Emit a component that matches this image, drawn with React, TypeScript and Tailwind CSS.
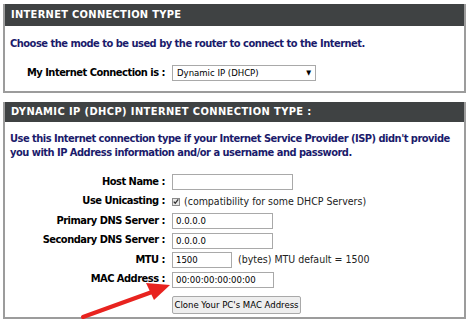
import { useState } from "react";

const font = "[font-family:'DejaVu_Sans',sans-serif] [font-stretch:condensed]";

function Field({ label, children }: { label: string; children: React.ReactNode }) {
  return (
    <div className="flex items-center h-[16px]">
      <div className="w-[161px] text-right font-bold text-[11px] tracking-[-0.5px] text-black pr-[1px] whitespace-nowrap">
        {label} :
      </div>
      <div className="ml-[6px] flex items-center">{children}</div>
    </div>
  );
}

function TextBox({ value, width }: { value?: string; width: string }) {
  return (
    <div
      className={`${width} h-[16px] border border-[#a9a9a9] bg-white px-[3px] text-[9.5px] leading-[14px] text-black`}
    >
      {value}
    </div>
  );
}

export default function App() {
  const [checked] = useState(true);
  return (
    <div className={`relative w-[469px] h-[323px] bg-white ${font} overflow-hidden`}>
      <div className="pt-[4px] pl-[3px] flex flex-col gap-[9px]">
        {/* connection type */}
        <div className="w-[463px] h-[89px] border-2 border-[#9c9c9c] border-t-0">
          <div className="h-[22px] bg-[#3f4243] text-white font-bold text-[11px] tracking-[0.3px] pl-[6px] flex items-center">
            INTERNET CONNECTION TYPE
          </div>
          <div className="pl-[5px] pt-[11px] text-[11px] tracking-[-0.5px] font-bold text-[#1b1b6b] leading-[14px] whitespace-nowrap">
            Choose the mode to be used by the router to connect to the Internet.
          </div>
          <div className="flex items-center mt-[14px] h-[16px]">
            <div className="w-[161px] text-right font-bold text-[11px] tracking-[-0.5px] text-black pr-[1px] whitespace-nowrap">
              My Internet Connection is :
            </div>
            <div className="ml-[6px] w-[144px] h-[16px] border border-[#a9a9a9] bg-white flex items-center justify-between px-[4px] text-[9.5px] text-black">
              <span>Dynamic IP (DHCP)</span>
              <span className="text-[7px]">▼</span>
            </div>
          </div>
        </div>

        {/* dhcp settings */}
        <div className="w-[463px] h-[217px] border-2 border-[#9c9c9c] border-t-0">
          <div className="h-[20px] bg-[#3f4243] text-white font-bold text-[11px] tracking-[0.4px] pl-[6px] flex items-center">
            DYNAMIC IP (DHCP) INTERNET CONNECTION TYPE :
          </div>
          <p className="pl-[5px] pt-[10px] text-[11px] tracking-[-0.5px] font-bold text-[#1b1b6b] leading-[14px] whitespace-nowrap">
            Use this Internet connection type if your Internet Service Provider (ISP) didn't provide
            <br />
            you with IP Address information and/or a username and password.
          </p>
          <div className="mt-[14px] flex flex-col gap-[3.5px]">
            <Field label="Host Name">
              <TextBox width="w-[121px]" />
            </Field>
            <Field label="Use Unicasting">
              <div className="w-[8px] h-[8px] border border-[#8a8a8a] bg-[#e6e6e6] flex items-center justify-center">
                {checked && (
                  <svg width="7" height="7" viewBox="0 0 8 8">
                    <path d="M1 4.2 L3 6.4 L7 1.2" stroke="#333" strokeWidth="1.8" fill="none" />
                  </svg>
                )}
              </div>
              <span className="ml-[4px] text-[10.5px] text-[#222] whitespace-nowrap">
                (compatibility for some DHCP Servers)
              </span>
            </Field>
            <Field label="Primary DNS Server">
              <TextBox value="0.0.0.0" width="w-[101px]" />
            </Field>
            <Field label="Secondary DNS Server">
              <TextBox value="0.0.0.0" width="w-[101px]" />
            </Field>
            <Field label="MTU">
              <TextBox value="1500" width="w-[60px]" />
              <span className="ml-[6px] text-[10.5px] text-[#222] whitespace-nowrap">(bytes) MTU default = 1500</span>
            </Field>
            <Field label="MAC Address">
              <TextBox value="00:00:00:00:00:00" width="w-[102px]" />
            </Field>
            <div className="pl-[167px]">
              <button className="h-[18px] w-[129px] border border-[#a9a9a9] bg-[#eeeeee] text-[9.5px] text-black rounded-[2px] whitespace-nowrap">
                Clone Your PC's MAC Address
              </button>
            </div>
          </div>
        </div>
      </div>

      {/* red arrow */}
      <svg className="absolute left-0 top-0" width="469" height="323" viewBox="0 0 469 323">
        <line x1="83" y1="317" x2="152" y2="292" stroke="#e8231f" strokeWidth="4" strokeLinecap="round" />
        <polygon points="170,285 146,283 154,300" fill="#e8231f" />
      </svg>
    </div>
  );
}
